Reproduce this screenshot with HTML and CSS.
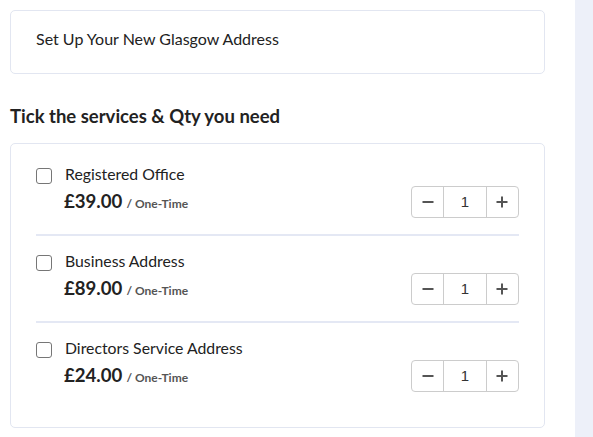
FILE: index.html
```html
<!DOCTYPE html>
<html>
<head>
<meta charset="utf-8">
<link rel="stylesheet" href="styles.css">
</head>
<body>
<div class="page">
  <main class="main">
    <div class="card title-card">Set Up Your New Glasgow Address</div>
    <h2 class="heading">Tick the services &amp; Qty you need</h2>
    <div class="card services">
      <div class="row">
        <label class="label"><span class="check"></span>Registered Office</label>
        <div class="price-line">
          <div class="price"><strong>£39.00</strong> <span class="per">/ One-Time</span></div>
          <div class="stepper"><span class="btn minus"></span><span class="qty">1</span><span class="btn plus"></span></div>
        </div>
      </div>
      <div class="row">
        <label class="label"><span class="check"></span>Business Address</label>
        <div class="price-line">
          <div class="price"><strong>£89.00</strong> <span class="per">/ One-Time</span></div>
          <div class="stepper"><span class="btn minus"></span><span class="qty">1</span><span class="btn plus"></span></div>
        </div>
      </div>
      <div class="row">
        <label class="label"><span class="check"></span>Directors Service Address</label>
        <div class="price-line">
          <div class="price"><strong>£24.00</strong> <span class="per">/ One-Time</span></div>
          <div class="stepper"><span class="btn minus"></span><span class="qty">1</span><span class="btn plus"></span></div>
        </div>
      </div>
    </div>
  </main>
  <aside class="side"></aside>
</div>
</body>
</html>
```
FILE: styles.css
```css
* { box-sizing: border-box; }
html, body { margin: 0; padding: 0; }
body {
  font-family: "Lato", "Noto Sans", sans-serif;
  color: #222;
  background: #fff;
}
.page {
  display: flex;
  min-height: 437px;
}
.main {
  width: 575px;
  padding: 10px 30px 0 10px;
}
.side {
  flex: 1;
  background: #edf0f9;
}
.card {
  border: 1px solid #e2e6f1;
  border-radius: 5px;
  background: #fff;
}
.title-card {
  height: 64px;
  padding: 0 25px 8px;
  display: flex;
  align-items: center;
  font-size: 16px;
}
.heading {
  margin: 30px 0 15px;
  font-size: 18.5px;
  font-weight: 700;
  line-height: 24px;
}
.services {
  padding: 2px 25px 35px;
}
.row {
  padding: 16px 0 16px;
  border-bottom: 2px solid #e4e8f4;
}
.row + .row { padding-top: 13px; }
.row:last-child { border-bottom: none; padding-bottom: 0; }
.label {
  display: flex;
  align-items: center;
  height: 22px;
  font-size: 15.8px;
}
.check {
  width: 16px;
  height: 16px;
  border: 1px solid #767676;
  border-radius: 3px;
  margin-right: 13px;
  margin-top: 5px;
  flex: none;
}
.price-line {
  display: flex;
  align-items: center;
  justify-content: space-between;
  margin-top: 2px;
  padding-left: 28px;
}
.price {
  margin-bottom: 2px;
}
.price strong {
  font-size: 18.6px;
  font-weight: 700;
}
.per {
  font-size: 12px;
  font-weight: 700;
  color: #555;
}
.stepper {
  display: flex;
  width: 108px;
  height: 32px;
  border: 1px solid #ccc;
  border-radius: 4px;
}
.btn {
  width: 32px;
  position: relative;
}
.qty {
  width: 44px;
  border-left: 1px solid #ccc;
  border-right: 1px solid #ccc;
  display: flex;
  align-items: center;
  justify-content: center;
  font-family: "Liberation Sans", sans-serif;
  font-size: 15px;
  color: #333;
  padding-bottom: 2px;
}
.btn::before, .plus::after {
  content: "";
  position: absolute;
  left: 50%;
  top: 50%;
  width: 11px;
  height: 2px;
  background: #555;
  transform: translate(-50%, -50%);
}
.plus::after {
  width: 2px;
  height: 11px;
}
```
